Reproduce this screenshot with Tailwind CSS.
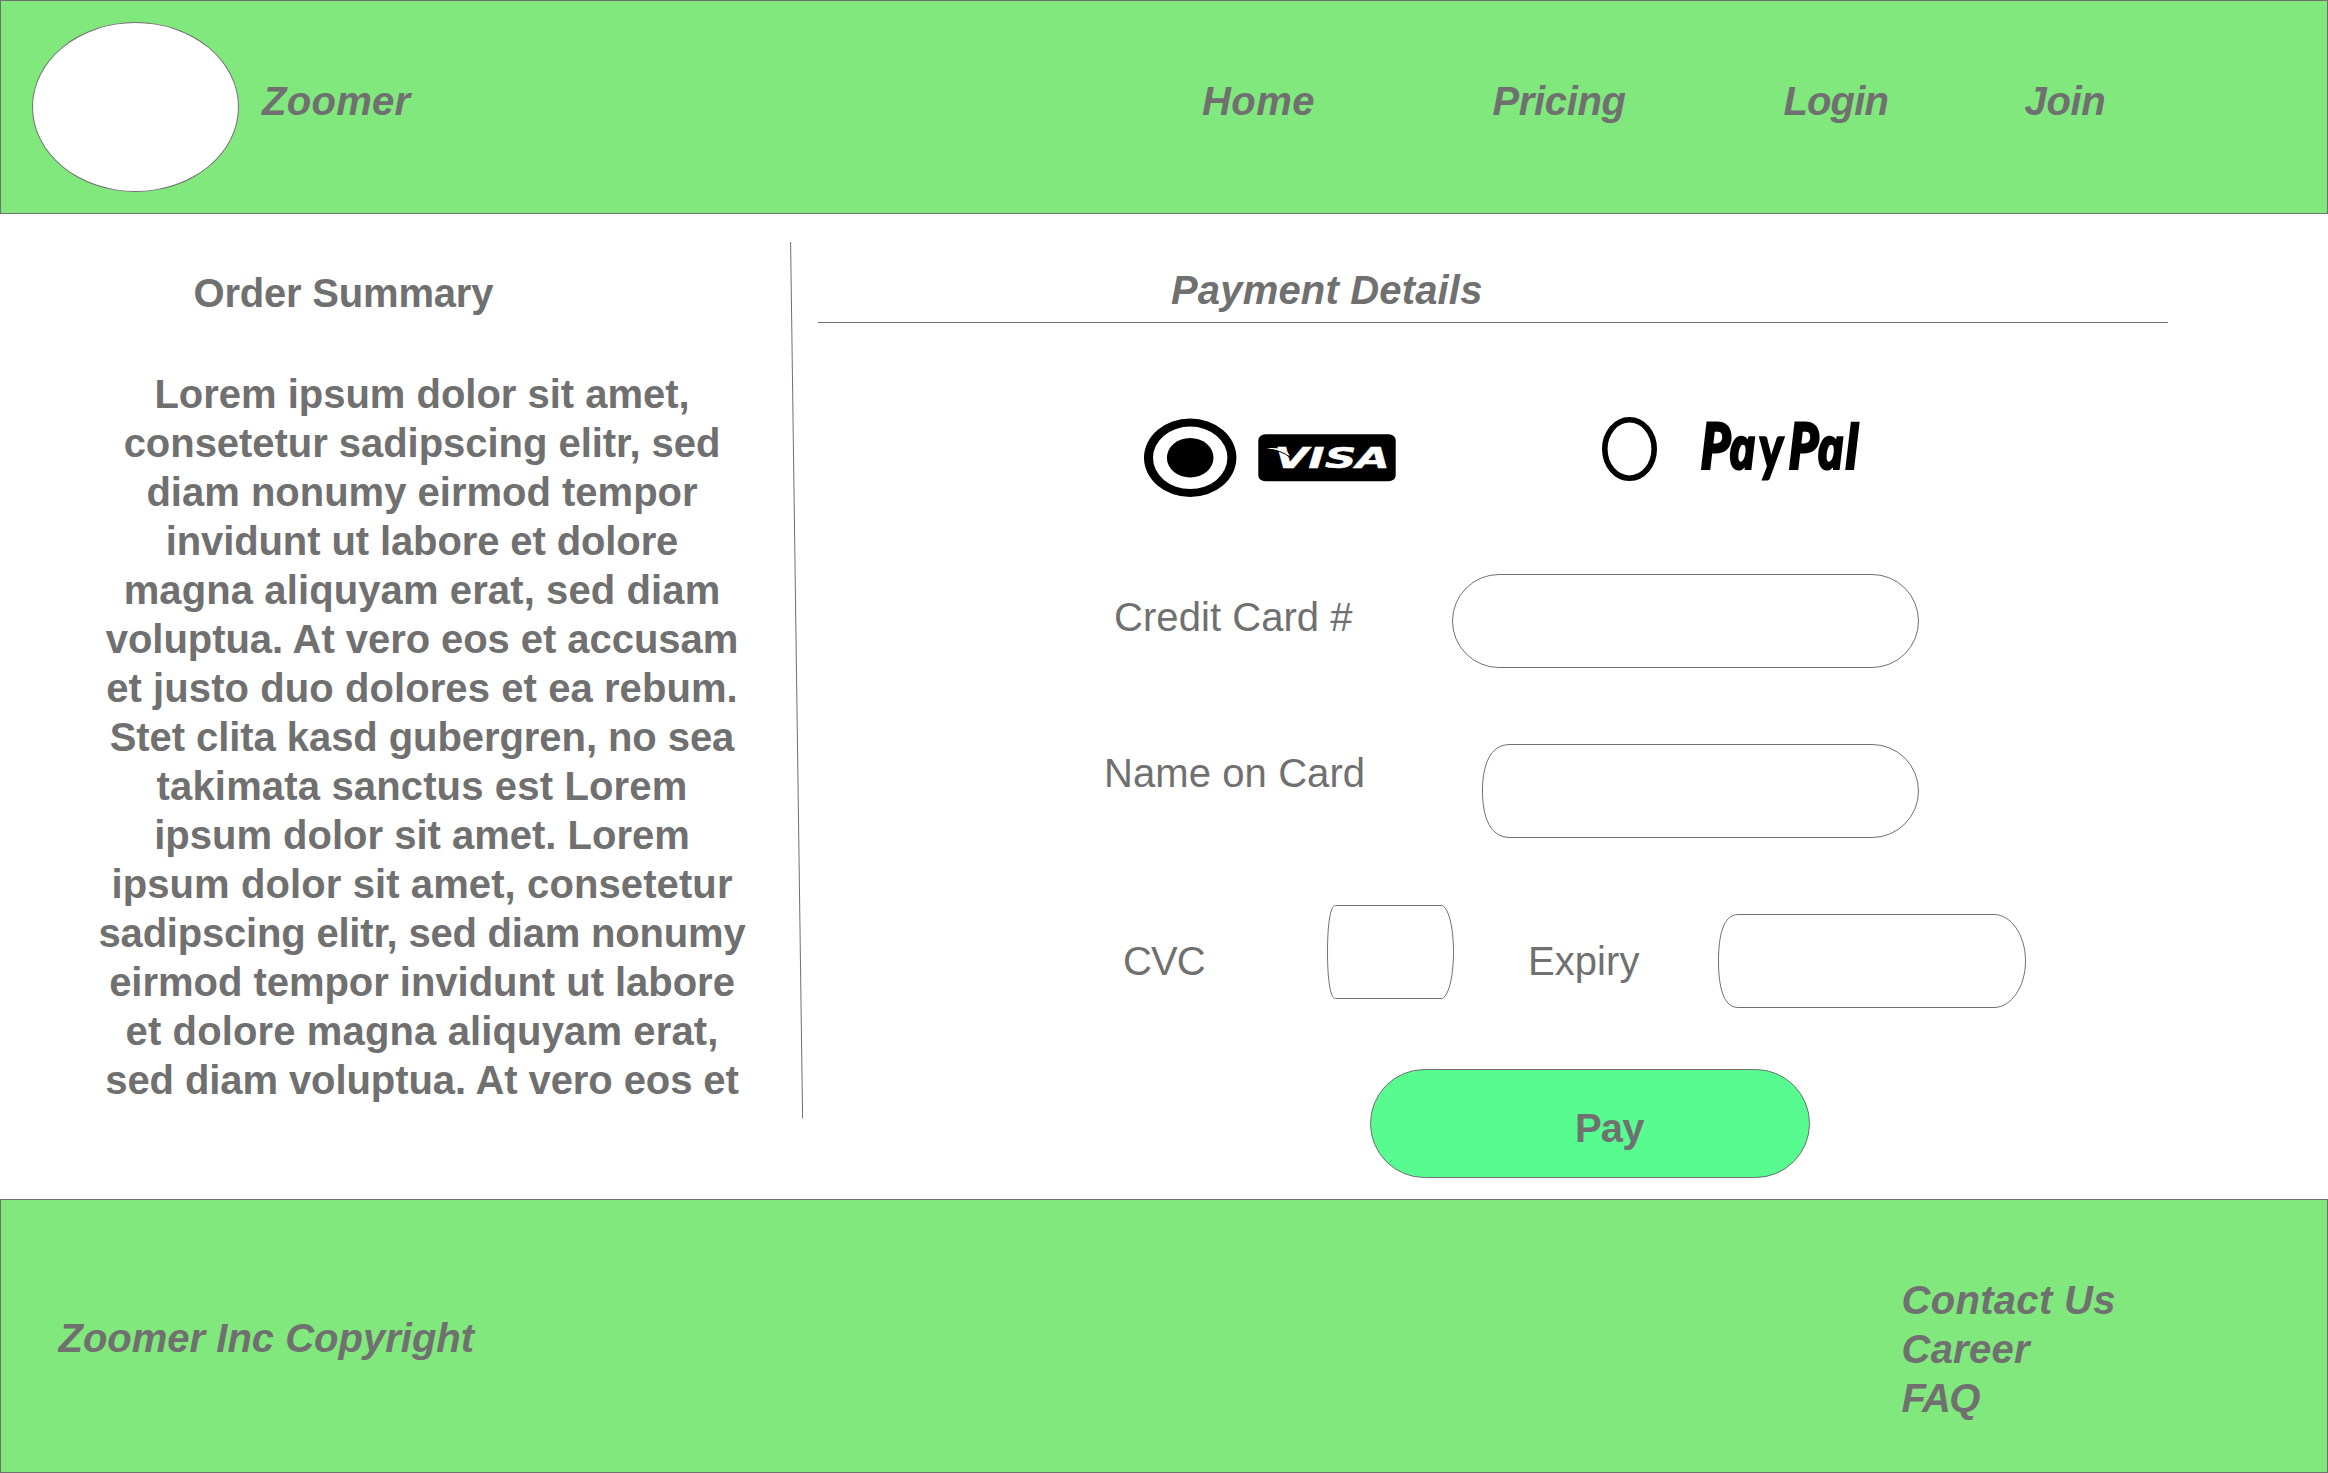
<!DOCTYPE html>
<html lang="en">
<head>
<meta charset="utf-8">
<title>Zoomer - Payment</title>
<script src="https://cdn.jsdelivr.net/npm/@tailwindcss/browser@4"></script>
</head>
<body class="w-[2328px] h-[1473px] overflow-hidden bg-white text-[#707070] text-[40px] leading-[49px] whitespace-nowrap font-['Liberation_Sans',Arial,sans-serif]">
<header class="flex h-[214px] border border-[#707070] bg-[#80e87c] font-bold italic">
  <div class="ml-[31px] mt-[21px] h-[170px] w-[207px] rounded-[50%] border border-[#707070] bg-white"></div>
  <div class="ml-[23px] mt-[76px] w-[940px] tracking-[0.28px]">Zoomer</div>
  <nav class="mt-[76px] grid grid-cols-[290.500px_291px_241px_auto] content-start">
    <a class="tracking-[0.47px]">Home</a>
    <a class="tracking-[-0.36px]">Pricing</a>
    <a class="tracking-[-0.88px]">Login</a>
    <a class="tracking-[-0.33px]">Join</a>
  </nav>
</header>

<main class="flex h-[985px]">
  <aside class="w-[790px] shrink-0 pt-[55px] font-bold">
    <h2 class="ml-[193.500px] tracking-[-0.2px]">Order Summary</h2>
    <div class="ml-[22px] mt-[52px] flex w-[800px] flex-col items-center">
      <span class="tracking-[-0.02px]">Lorem ipsum dolor sit amet,</span>
      <span class="tracking-[-0.04px]">consetetur sadipscing elitr, sed</span>
      <span>diam nonumy eirmod tempor</span>
      <span class="tracking-[-0.11px]">invidunt ut labore et dolore</span>
      <span class="tracking-[0.11px]">magna aliquyam erat, sed diam</span>
      <span class="tracking-[-0.06px]">voluptua. At vero eos et accusam</span>
      <span class="tracking-[0.08px]">et justo duo dolores et ea rebum.</span>
      <span class="tracking-[-0.07px]">Stet clita kasd gubergren, no sea</span>
      <span class="tracking-[0.15px]">takimata sanctus est Lorem</span>
      <span>ipsum dolor sit amet. Lorem</span>
      <span class="tracking-[0.1px]">ipsum dolor sit amet, consetetur</span>
      <span class="tracking-[-0.2px]">sadipscing elitr, sed diam nonumy</span>
      <span class="tracking-[-0.03px]">eirmod tempor invidunt ut labore</span>
      <span class="tracking-[0.13px]">et dolore magna aliquyam erat,</span>
      <span class="tracking-[-0.09px]">sed diam voluptua. At vero eos et</span>
    </div>
  </aside>

  <svg class="mt-[28px] h-[878px] w-[14px] shrink-0" viewBox="0 0 14 878"><path d="M.6 0 12.6 876.500" stroke="#707070" fill="none"/></svg>

  <section class="ml-[14px] w-[1350px]">
    <h2 class="h-[109px] border-b border-[#707070] pl-[353px] pt-[52px] font-bold italic tracking-[0.17px]">Payment Details</h2>

    <div class="mt-[94px] flex h-[82px]">
      <svg class="ml-[326px] mt-px h-[80px] w-[93px]" viewBox="1144 418 93 80">
        <ellipse cx="1190.200" cy="457.800" rx="41.700" ry="35.250" fill="#fff"/>
        <path fill-rule="evenodd" d="M1144 457.800a46.200 39.200 0 1 0 92.400 0a46.200 39.200 0 1 0-92.400 0zM1153 457.800a37.200 31.300 0 1 1 74.400 0a37.200 31.300 0 1 1-74.400 0z"/>
        <ellipse cx="1190.200" cy="457.800" rx="23.300" ry="19.700"/>
      </svg>
      <svg class="ml-[21px] mt-[17px] h-[48px] w-[138px] overflow-visible" viewBox="1258 434 138 48">
        <rect x="1258.300" y="434.300" width="137.400" height="47" rx="7" ry="6"/>
        <g transform="translate(1276 468) scale(1.6 1)"><text x="-1 20.200 30.400 49.800" y="0" fill="#fff" stroke="#fff" stroke-width=".4" class="text-[27.500px] font-bold italic font-['DejaVu_Sans',sans-serif]">VISA</text></g>
        <path d="M1266 448.300q7-.8 14.500.2q8 2.600 9.200 7.600q-8-6-23.700-7.800z" fill="#fff"/>
        <path d="M1266 449q16 1.300 23.500 8" fill="none" stroke="#000" stroke-width="1"/>
      </svg>
      <svg class="ml-[206px] h-[64px] w-[56px]" viewBox="1602 417 56 64"><ellipse cx="1629.500" cy="449" rx="24.700" ry="29.200" fill="#fff" stroke="#000" stroke-width="5.600"/></svg>
      <svg class="ml-[40px] h-[68px] w-[166px] overflow-visible" viewBox="1698 417 166 68">
        <g transform="translate(1700 469) skewX(3) scale(.8 1)" fill="#000" stroke="#000" stroke-width="2" class="font-bold italic font-['Open_Sans',sans-serif]"><text y="0" class="text-[65px]"><tspan x="0.500">P</tspan><tspan x="36.500" class="text-[58px]">a</tspan><tspan x="75" class="text-[62px] font-['Lato']">y</tspan><tspan x="110.500">P</tspan><tspan x="147" class="text-[58px]">a</tspan><tspan x="181.500" class="text-[61px]">l</tspan></text></g>
      </svg>
    </div>

    <div class="mt-[75px] flex h-[94px]">
      <label class="ml-[296px] mt-[19px] w-[338px] tracking-[0.06px]">Credit Card #</label>
      <div class="w-[467px] rounded-[47px] border border-[#707070]"></div>
    </div>
    <div class="mt-[76px] flex h-[94px]">
      <label class="ml-[286px] mt-[5px] w-[378px] tracking-[0.09px]">Name on Card</label>
      <svg class="h-[94px] w-[437px]" viewBox="0 0 437 94" fill="#fff" stroke="#707070"><path d="M28 .5H390a46.500 46.500 0 0 1 0 93H28C8 93.500.5 73 .5 47S8 .5 28 .5z"/></svg>
    </div>
    <div class="mt-[67px] flex h-[103px]">
      <label class="ml-[305px] mt-[32px] w-[204px] tracking-[-0.88px]">CVC</label>
      <svg class="h-[94px] w-[127px]" viewBox="0 0 127 94" fill="#fff" stroke="#707070"><path d="M8.500 .5H114C121 .5 126.500 21 126.500 47S121 93.500 114 93.500H8.500C3 93.500 .5 73 .5 47S3 .5 8.500 .5z"/></svg>
      <label class="ml-[74px] mt-[32px] w-[190px] tracking-[0.05px]">Expiry</label>
      <svg class="mt-[9px] h-[94px] w-[308px]" viewBox="0 0 308 94" fill="#fff" stroke="#707070"><path d="M20 .5H276C293 .5 307.500 21 307.500 47S293 93.500 276 93.500H20C5.500 93.500 .5 73 .5 47S5.500 .5 20 .5z"/></svg>
    </div>
    <button class="ml-[552px] mt-[61px] block h-[109px] w-[440px] rounded-[54.5px] border border-[#707070] bg-[#57fb90] pl-[204px] pt-[9px] text-left font-bold tracking-[-0.86px]">Pay</button>
  </section>
</main>

<footer class="flex h-[274px] border border-[#707070] bg-[#80e87c] font-bold italic">
  <div class="ml-[57.500px] mt-[114px] w-[1843px]">Zoomer Inc Copyright</div>
  <div class="mt-[76px] flex flex-col">
    <a class="tracking-[0.31px]">Contact Us</a>
    <a class="tracking-[0.24px]">Career</a>
    <a class="tracking-[-1.7px]">FAQ</a>
  </div>
</footer>
</body>
</html>
